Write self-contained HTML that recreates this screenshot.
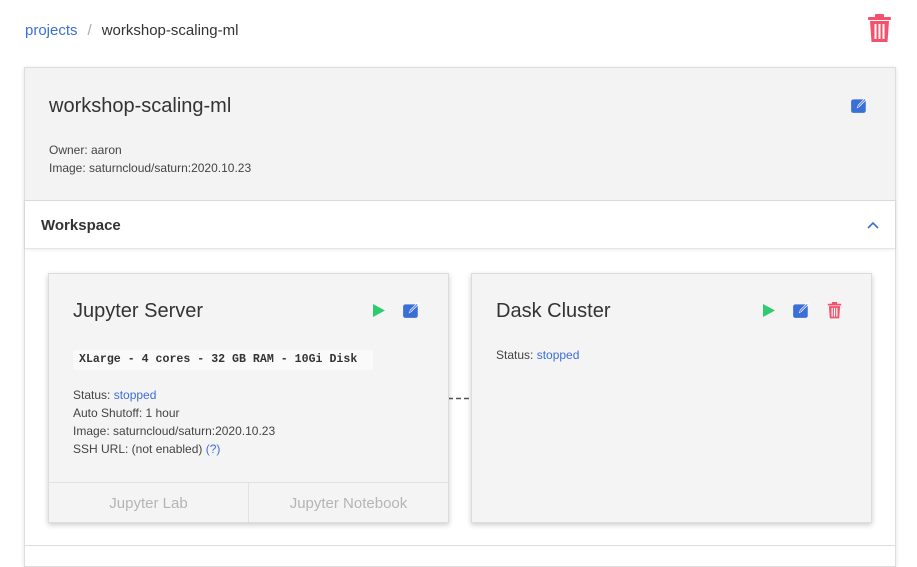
<!DOCTYPE html>
<html><head><style>
*{box-sizing:border-box;margin:0;padding:0}
body{width:917px;height:555px;overflow:hidden;background:#fff;font-family:"Liberation Sans",sans-serif;color:#333;position:relative}
.abs{position:absolute}
.bc{left:25px;top:22px;font-size:15px;color:#333}
.bc a{color:#3b6fd8;text-decoration:none}
.bc .sep{color:#aaa;margin:0 10px}
.outer{left:24px;top:67px;width:872px;height:500px;border:1px solid #ddd;box-shadow:0 1px 4px rgba(0,0,0,.12)}
.head{left:25px;top:68px;width:870px;height:133px;background:#f3f3f3;border-bottom:1px solid #ddd}
.ws{left:25px;top:201px;width:870px;height:48px;background:#fff;border-bottom:1px solid #e6e6e6;box-shadow:0 1px 3px rgba(0,0,0,.08)}
.card{background:#f4f4f4;border:1px solid #ddd;box-shadow:0 2px 5px rgba(0,0,0,.2)}
.t12{font-size:12px;line-height:18px;color:#444}
.blue{color:#3b6fd8}
</style></head><body>
<div class="abs bc"><a>projects</a><span class="sep">/</span>workshop-scaling-ml</div>
<svg class="abs" style="left:867px;top:14px" width="25" height="29" viewBox="0 0 25 29"><rect x="1" y="3" width="23" height="3" rx="1" fill="#f4516c"/><rect x="8" y="0" width="9" height="4" rx="1" fill="#f4516c"/><path d="M3 7h19l-1.5 21h-16z" fill="#f4516c"/><rect x="7.5" y="10" width="2" height="15" fill="#fff"/><rect x="11.5" y="10" width="2" height="15" fill="#fff"/><rect x="15.5" y="10" width="2" height="15" fill="#fff"/></svg>
<div class="abs outer"></div>
<div class="abs head"></div>
<div class="abs" style="left:49px;top:95px;font-size:20px;color:#333">workshop-scaling-ml</div>
<svg class="abs" style="left:850px;top:96px" width="18" height="18" viewBox="0 0 16 16"><rect x="1" y="3" width="13" height="12" rx="2" fill="#3b6fd8"/><path d="M6 11l1-3 7-7 1.5 1.5-7 7z" fill="#fff"/><path d="M7 9.5l6.5-6.5" stroke="#3b6fd8" stroke-width=".8"/></svg>
<div class="abs t12" style="left:49px;top:141px">Owner: aaron<br>Image: saturncloud/saturn:2020.10.23</div>
<div class="abs ws"></div>
<div class="abs" style="left:41px;top:217px;font-size:15px;font-weight:bold;color:#333">Workspace</div>
<svg class="abs" style="left:866px;top:220px" width="14" height="10" viewBox="0 0 14 10"><path d="M2 8l5-5 5 5" stroke="#3b6fd8" stroke-width="1.6" fill="none"/></svg>
<div class="abs" style="left:25px;top:545px;width:870px;height:1px;background:#ddd"></div>
<svg class="abs" style="left:448px;top:397px" width="24" height="3"><line x1="0" y1="1.5" x2="24" y2="1.5" stroke="#555" stroke-width="1.5" stroke-dasharray="5,3"/></svg>

<div class="abs card" style="left:48px;top:273px;width:401px;height:250px"></div>
<div class="abs" style="left:73px;top:300px;font-size:20px;color:#333">Jupyter Server</div>
<svg class="abs" style="left:372px;top:303px" width="14" height="15" viewBox="0 0 14 15"><path d="M1 1l12 6.5-12 6.5z" fill="#2ecc71"/></svg>
<svg class="abs" style="left:402px;top:301px" width="18" height="18" viewBox="0 0 16 16"><rect x="1" y="3" width="13" height="12" rx="2" fill="#3b6fd8"/><path d="M6 11l1-3 7-7 1.5 1.5-7 7z" fill="#fff"/><path d="M7 9.5l6.5-6.5" stroke="#3b6fd8" stroke-width=".8"/></svg>
<div class="abs" style="left:73px;top:350px;width:300px;height:20px;background:#fafafa;font-family:'Liberation Mono',monospace;font-weight:bold;font-size:11.6px;line-height:20px;padding-left:6px;color:#333">XLarge - 4 cores - 32 GB RAM - 10Gi Disk</div>
<div class="abs t12" style="left:73px;top:386px">Status: <span class="blue">stopped</span><br>Auto Shutoff: 1 hour<br>Image: saturncloud/saturn:2020.10.23<br>SSH URL: (not enabled) <span class="blue">(?)</span></div>
<div class="abs" style="left:49px;top:482px;width:399px;height:1px;background:#e2e2e2"></div>
<div class="abs" style="left:248px;top:483px;width:1px;height:39px;background:#e2e2e2"></div>
<div class="abs" style="left:49px;top:495px;width:199px;text-align:center;font-size:15px;color:#b5b5b5">Jupyter Lab</div>
<div class="abs" style="left:249px;top:495px;width:199px;text-align:center;font-size:15px;color:#b5b5b5">Jupyter Notebook</div>

<div class="abs card" style="left:471px;top:273px;width:401px;height:250px"></div>
<div class="abs" style="left:496px;top:300px;font-size:20px;color:#333">Dask Cluster</div>
<svg class="abs" style="left:762px;top:303px" width="14" height="15" viewBox="0 0 14 15"><path d="M1 1l12 6.5-12 6.5z" fill="#2ecc71"/></svg>
<svg class="abs" style="left:792px;top:301px" width="18" height="18" viewBox="0 0 16 16"><rect x="1" y="3" width="13" height="12" rx="2" fill="#3b6fd8"/><path d="M6 11l1-3 7-7 1.5 1.5-7 7z" fill="#fff"/><path d="M7 9.5l6.5-6.5" stroke="#3b6fd8" stroke-width=".8"/></svg>
<svg class="abs" style="left:827px;top:302px" width="15" height="17" viewBox="0 0 25 29"><rect x="1" y="3" width="23" height="3" rx="1" fill="#f4516c"/><rect x="8" y="0" width="9" height="4" rx="1" fill="#f4516c"/><path d="M3 7h19l-1.5 21h-16z" fill="#f4516c"/><rect x="7.5" y="10" width="2" height="15" fill="#fff"/><rect x="11.5" y="10" width="2" height="15" fill="#fff"/><rect x="15.5" y="10" width="2" height="15" fill="#fff"/></svg>
<div class="abs t12" style="left:496px;top:346px">Status: <span class="blue">stopped</span></div>
</body></html>
